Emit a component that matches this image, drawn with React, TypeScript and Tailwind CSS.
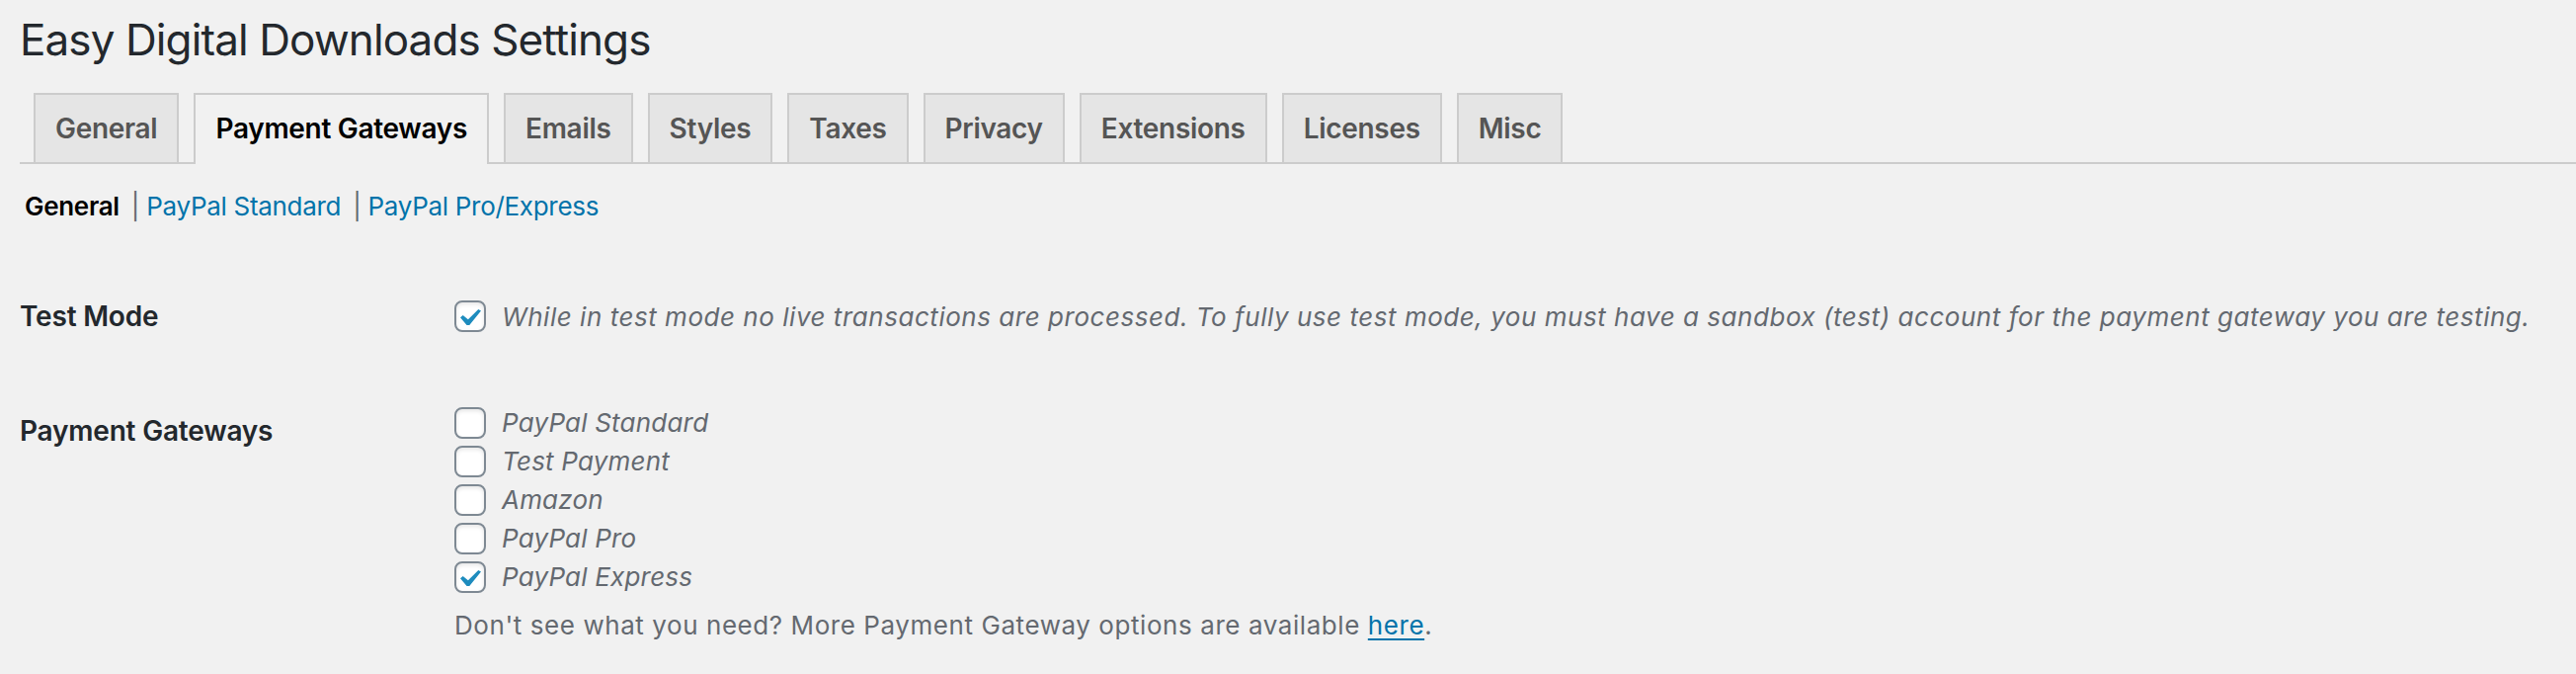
import React from "react";

function Box({ checked }: { checked?: boolean }) {
  return (
    <span className="relative inline-block w-[32px] h-[32px] shrink-0 rounded-[8px] border-2 border-[#7e8993] bg-white shadow-[inset_0_2px_4px_rgba(0,0,0,0.1)]">
      {checked && (
        <svg
          className="absolute left-[4px] top-[7px]"
          width="21"
          height="16"
          viewBox="5.78 4.89 10.39 9.32"
          preserveAspectRatio="none"
        >
          <path
            d="M14.83 4.89l1.34.94-5.81 8.38H9.02L5.78 9.67l1.34-1.25 2.57 2.4z"
            fill="#1e8cbe"
          />
        </svg>
      )}
    </span>
  );
}

const tabs = [
  "General",
  "Payment Gateways",
  "Emails",
  "Styles",
  "Taxes",
  "Privacy",
  "Extensions",
  "Licenses",
  "Misc",
];

const gateways: { name: string; checked?: boolean }[] = [
  { name: "PayPal Standard" },
  { name: "Test Payment" },
  { name: "Amazon" },
  { name: "PayPal Pro" },
  { name: "PayPal Express", checked: true },
];

export default function App() {
  return (
    <div className="min-h-[682px] w-full bg-[#f1f1f1] pl-[20px] font-['Inter','Noto_Sans',sans-serif] text-[#23282d]">
      <div className="h-[80px] flex items-center text-[44px] tracking-[-0.9px] font-normal leading-none">
        Easy Digital Downloads Settings
      </div>

      <div className="mt-[14px] flex items-end border-b-2 border-[#cccccc] pl-[14px]">
        {tabs.map((t, i) =>
          t === "Payment Gateways" ? (
            <div
              key={t}
              className="relative ml-[15px] -mb-[2px] h-[72px] pb-[2px] flex items-center px-[20px] border-2 border-b-0 border-[#cccccc] bg-[#f1f1f1] text-[28px] tracking-[-0.3px] font-semibold text-black"
            >
              {t}
            </div>
          ) : (
            <div
              key={t}
              className={`${i === 0 ? "ml-0" : "ml-[15px]"} h-[70px] flex items-center px-[20px] border-2 border-b-0 border-[#cccccc] bg-[#e5e5e5] text-[28px] tracking-[-0.3px] font-semibold text-[#555555]`}
            >
              {t}
            </div>
          )
        )}
      </div>

      <div className="h-[84px] flex items-center text-[26px] tracking-[-0.3px] whitespace-pre">
        <span className="px-[5px] font-semibold text-black">General</span>
        <span className="ml-[7px] mr-[2px] text-[#646970]">|</span>
        <span className="px-[5px] text-[#0073aa]">PayPal Standard</span>
        <span className="ml-[7px] mr-[2px] text-[#646970]">|</span>
        <span className="px-[5px] text-[#0073aa]">PayPal Pro/Express</span>
      </div>

      <div className="mt-[12px] h-[116px] flex items-center">
        <div className="w-[440px] shrink-0 text-[28px] tracking-[-0.2px] font-semibold leading-[36px] text-[#23282d]">
          Test Mode
        </div>
        <div className="flex items-center">
          <Box checked />
          <span className="ml-[16px] text-[26px] tracking-[0.53px] italic text-[#646970] leading-[39px] whitespace-nowrap">
            While in test mode no live transactions are processed. To fully use test mode, you must have a sandbox (test) account for the payment gateway you are testing.
          </span>
        </div>
      </div>

      <div className="flex">
        <div className="w-[440px] shrink-0 pt-[40px] text-[28px] tracking-[-0.2px] font-semibold leading-[36px] text-[#23282d]">
          Payment Gateways
        </div>
        <div className="pt-[30px]">
          {gateways.map((g) => (
            <div key={g.name} className="h-[39px] flex items-center">
              <Box checked={g.checked} />
              <span className="ml-[16px] text-[26px] tracking-[0.2px] italic text-[#646970]">{g.name}</span>
            </div>
          ))}
          <p className="mt-[10px] h-[39px] flex items-center text-[26px] tracking-[0.57px] text-[#646970] whitespace-pre">
            Don't see what you need? More Payment Gateway options are available{" "}
            <span className="text-[#0073aa] underline underline-offset-[4px]">here</span>.
          </p>
        </div>
      </div>
    </div>
  );
}
